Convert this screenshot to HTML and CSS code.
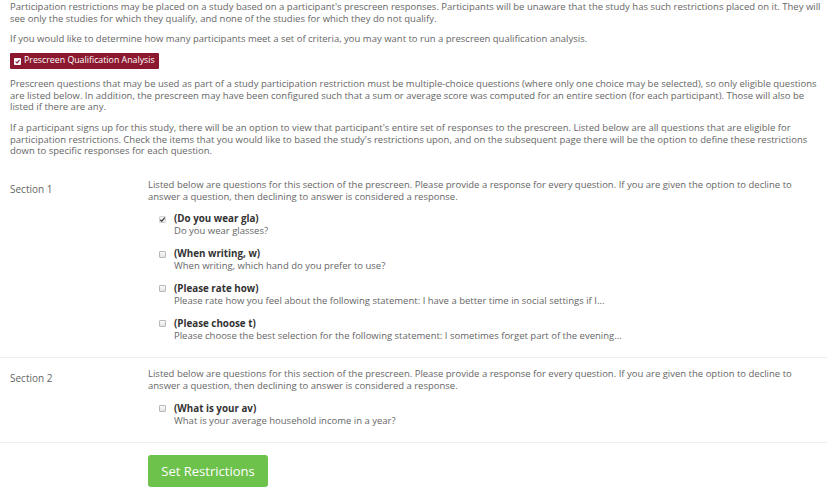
FILE: index.html
```html
<!DOCTYPE html>
<html>
  <head>
    <title>Study restrictions</title>
    <meta charset="utf-8"/>
    <link rel="stylesheet" href="styles.css">
  </head>
  <body>
    <div class="page">

      <div class="intro">
        <p>
          Participation restrictions may be placed on a study based on a participant's prescreen responses. Participants will be unaware that the study has such restrictions placed on it. They will
          see only the studies for which they qualify, and none of the studies for which they do not qualify.
        </p>
        <p>
          If you would like to determine how many participants meet a set of criteria, you may want to run a prescreen qualification analysis.
        </p>
        <p>
          <a class="btn-analysis" href="#">
            <svg class="icon" viewBox="0 0 8 8" width="7" height="7">
              <rect x="0" y="0" width="8" height="8" rx="1.2" fill="#fff"/>
              <path d="M1.8 4.2 L3.4 5.7 L6.3 2.3" fill="none" stroke="#8c1830" stroke-width="1.3"/>
            </svg>
            Prescreen Qualification Analysis
          </a>
        </p>
        <p>
          Prescreen questions that may be used as part of a study participation restriction must be multiple-choice questions (where only one choice may be selected), so only eligible questions
          are listed below. In addition, the prescreen may have been configured such that a sum or average score was computed for an entire section (for each participant). Those will also be
          listed if there are any.
        </p>
        <p>
          If a participant signs up for this study, there will be an option to view that participant's entire set of responses to the prescreen. Listed below are all questions that are eligible for
          participation restrictions. Check the items that you would like to based the study's restrictions upon, and on the subsequent page there will be the option to define these restrictions
          down to specific responses for each question.
        </p>
      </div>

      <div class="section-row">
        <div class="section-label">Section 1</div>
        <div class="section-body">
          <p class="section-note">
            Listed below are questions for this section of the prescreen. Please provide a response for every question. If you are given the option to decline to
            answer a question, then declining to answer is considered a response.
          </p>
          <label class="question">
            <input type="checkbox" checked>
            <span class="q-text">
              <strong>(Do you wear gla)</strong>
              <span class="q-desc">Do you wear glasses?</span>
            </span>
          </label>
          <label class="question">
            <input type="checkbox">
            <span class="q-text">
              <strong>(When writing, w)</strong>
              <span class="q-desc">When writing, which hand do you prefer to use?</span>
            </span>
          </label>
          <label class="question">
            <input type="checkbox">
            <span class="q-text">
              <strong>(Please rate how)</strong>
              <span class="q-desc">Please rate how you feel about the following statement: I have a better time in social settings if I...</span>
            </span>
          </label>
          <label class="question">
            <input type="checkbox">
            <span class="q-text">
              <strong>(Please choose t)</strong>
              <span class="q-desc">Please choose the best selection for the following statement: I sometimes forget part of the evening...</span>
            </span>
          </label>
        </div>
      </div>

      <div class="section-row">
        <div class="section-label">Section 2</div>
        <div class="section-body">
          <p class="section-note">
            Listed below are questions for this section of the prescreen. Please provide a response for every question. If you are given the option to decline to
            answer a question, then declining to answer is considered a response.
          </p>
          <label class="question">
            <input type="checkbox">
            <span class="q-text">
              <strong>(What is your av)</strong>
              <span class="q-desc">What is your average household income in a year?</span>
            </span>
          </label>
        </div>
      </div>

      <div class="actions">
        <button class="btn-submit" type="button">Set Restrictions</button>
      </div>

    </div>
  </body>
</html>
```

FILE: styles.css
```css
body {
  margin: 0;
  background: #fff;
  color: #666;
  font-family: "Open Sans", "Liberation Sans", sans-serif;
  font-size: 9.5px;
  line-height: 11.8px;
}
.page {
  padding: 1px 4px 0 0;
}
.intro {
  padding: 0 5px 0 10px;
}
.intro p {
  margin: 0 0 8.5px;
}
.intro p:last-child {
  margin-bottom: 0;
}
.btn-analysis {
  display: inline-flex;
  align-items: center;
  gap: 3px;
  height: 16px;
  padding: 0 4px 0 4px;
  background: #8c1830;
  color: #fff;
  text-decoration: none;
  font-size: 8.8px;
  border-radius: 1px;
}
.btn-analysis .icon {
  display: block;
}
.section-row {
  display: grid;
  grid-template-columns: 138px 1fr;
  padding: 10px 0 5px 10px;
  border-bottom: 1px solid #eee;
}
.intro + .section-row {
  margin-top: 12px;
}
.section-label {
  padding-top: 4px;
  font-size: 10px;
  line-height: 13px;
}
.section-body {
  padding-right: 20px;
}
.section-note {
  margin: 0 0 10.5px;
}
.question {
  display: flex;
  align-items: flex-start;
  gap: 8px;
  padding-left: 11px;
  margin-bottom: 11px;
}
.question input {
  appearance: none;
  flex: none;
  width: 7px;
  height: 7px;
  margin: 2.5px 0 0;
  border: 1px solid #b8b8b8;
  border-radius: 1px;
  background: linear-gradient(#fafafa, #e4e4e4);
}
.question input:checked {
  border-color: #d4d4d4;
  background: #f2f2f2 url("data:image/svg+xml,%3Csvg xmlns='http://www.w3.org/2000/svg' viewBox='0 0 8 8'%3E%3Cpath d='M1.5 4.3 L3.2 6 L6.6 1.8' fill='none' stroke='%23444' stroke-width='1.5'/%3E%3C/svg%3E") center / 7px 7px no-repeat;
}
.q-text {
  display: flex;
  flex-direction: column;
}
.q-text strong {
  color: #333;
  font-size: 9.8px;
  line-height: 12px;
}
.actions {
  padding: 12px 0 0 148px;
}
.btn-submit {
  width: 120px;
  height: 32px;
  border: none;
  border-radius: 3px;
  background: #6dc24b;
  color: #fff;
  font-family: "Open Sans", "Liberation Sans", sans-serif;
  font-size: 13px;
  cursor: pointer;
}
```
